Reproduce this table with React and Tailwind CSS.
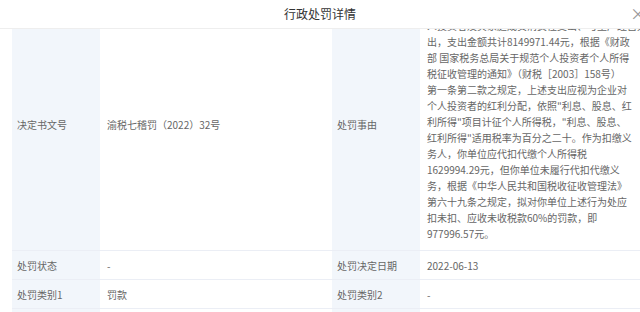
import React from 'react';

const reasonLines = [
  '人投资者及其家庭成员消费性支出、与生产经营无关支',
  '出，支出金额共计8149971.44元，根据《财政',
  '部 国家税务总局关于规范个人投资者个人所得',
  '税征收管理的通知》（财税［2003］158号）',
  '第一条第二款之规定，上述支出应视为企业对',
  '个人投资者的红利分配，依照"利息、股息、红',
  '利所得"项目计征个人所得税，"利息、股息、',
  '红利所得"适用税率为百分之二十。作为扣缴义',
  '务人，你单位应代扣代缴个人所得税',
  '1629994.29元，但你单位未履行代扣代缴义',
  '务，根据《中华人民共和国税收征收管理法》',
  '第六十九条之规定，拟对你单位上述行为处应',
  '扣未扣、应收未收税款60%的罚款，即',
  '977996.57元。',
];

const rows = [
  ['处罚状态', '-', '处罚决定日期', '2022-06-13'],
  ['处罚类别1', '罚款', '处罚类别2', '-'],
  ['处罚机关', '国家税务总局重庆市税务局第七稽查局', '处罚金额', '977996.57元'],
];

const Label = ({ children, className = '' }) => (
  <div className={`w-[88px] shrink-0 bg-[#f2f6fb] pl-[5px] flex items-center ${className}`}>
    {children}
  </div>
);

const Value = ({ children, className = '' }) => (
  <div className={`w-[232px] shrink-0 pl-[7px] flex items-center ${className}`}>
    {children}
  </div>
);

export default function App() {
  return (
    <div className="w-[640px] h-[312px] overflow-hidden bg-white font-['Noto_Sans_CJK_SC',sans-serif] text-[10px] text-[#666]">
      {/* Header */}
      <div className="relative h-[29px] border-b border-[#eeeeee] flex items-center justify-center">
        <span className="text-[12px] text-[#333]">行政处罚详情</span>
        <span className="absolute right-[-6px] top-[5px] text-[16px] leading-none text-[#999]">×</span>
      </div>

      {/* Scrolled body */}
      <div className="h-[283px] overflow-hidden pl-[12px]">
        <div className="w-[640px] mt-[-19px]">
          <div className="flex border-b border-[#ebeef5]">
            <Label className="pb-[12px]">决定书文号</Label>
            <Value className="pb-[12px]">渝税七稽罚（2022）32号</Value>
            <Label className="pb-[12px]">处罚事由</Label>
            <div className="w-[232px] shrink-0 pl-[7px] py-[8px] leading-[16px]">
              {reasonLines.map((line) => (
                <div key={line} className="whitespace-nowrap">{line}</div>
              ))}
            </div>
          </div>

          {rows.map(([l1, v1, l2, v2]) => (
            <div key={l1} className="flex h-[29px] border-b border-[#ebeef5]">
              <Label>{l1}</Label>
              <Value>{v1}</Value>
              <Label>{l2}</Label>
              <Value>{v2}</Value>
            </div>
          ))}
        </div>
      </div>
    </div>
  );
}
